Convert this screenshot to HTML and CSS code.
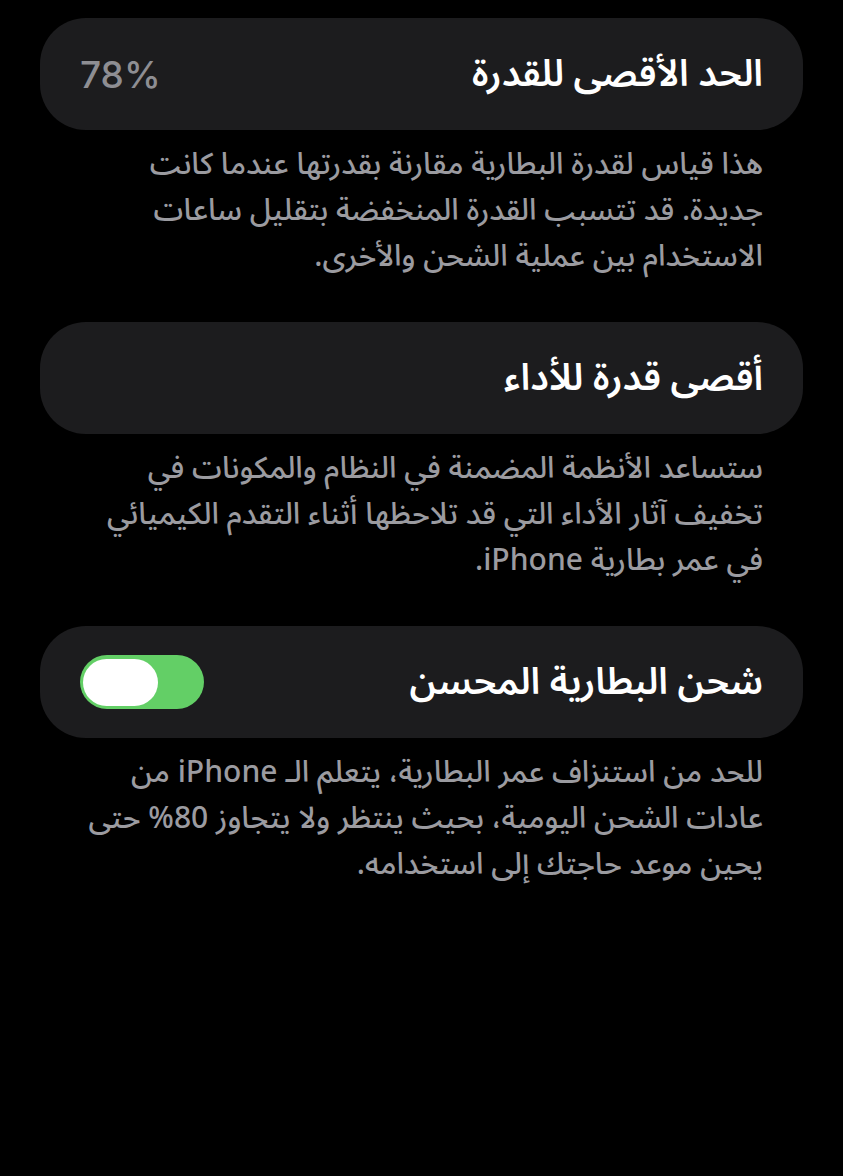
FILE: index.html
```html
<!DOCTYPE html>
<html lang="ar" dir="rtl">
<head>
<meta charset="utf-8">
<link rel="stylesheet" href="styles.css">
</head>
<body>
<main class="page">
  <section class="group">
    <div class="card">
      <span class="title">الحد الأقصى للقدرة</span>
      <span class="value">78%</span>
    </div>
    <p class="footer"><span class="line">هذا قياس لقدرة البطارية مقارنة بقدرتها عندما كانت</span><span class="line">جديدة. قد تتسبب القدرة المنخفضة بتقليل ساعات</span><span class="line">الاستخدام بين عملية الشحن والأخرى.</span></p>
  </section>
  <section class="group">
    <div class="card">
      <span class="title">أقصى قدرة للأداء</span>
    </div>
    <p class="footer"><span class="line">ستساعد الأنظمة المضمنة في النظام والمكونات في</span><span class="line">تخفيف آثار الأداء التي قد تلاحظها أثناء التقدم الكيميائي</span><span class="line">في عمر بطارية iPhone.</span></p>
  </section>
  <section class="group">
    <div class="card">
      <span class="title">شحن البطارية المحسن</span>
      <span class="toggle"><span class="knob"></span></span>
    </div>
    <p class="footer"><span class="line">للحد من استنزاف عمر البطارية، يتعلم الـ iPhone من</span><span class="line">عادات الشحن اليومية، بحيث ينتظر ولا يتجاوز 80% حتى</span><span class="line">يحين موعد حاجتك إلى استخدامه.</span></p>
  </section>
</main>
</body>
</html>
```
FILE: styles.css
```css
html, body {
  margin: 0;
  padding: 0;
  background: #000;
}
body {
  font-family: "Noto Sans Arabic", "DejaVu Sans", "Noto Sans", sans-serif;
  color: #fff;
}
.page {
  padding: 18px 40px 0 40px;
  display: flex;
  flex-direction: column;
  gap: 42px;
}
.group {
  display: flex;
  flex-direction: column;
}
.card {
  background: #1c1c1e;
  border-radius: 46px;
  height: 112px;
  padding: 0 40px;
  display: flex;
  align-items: center;
  justify-content: space-between;
  box-sizing: border-box;
}
.title {
  font-size: 37px;
  font-weight: 600;
  color: #fff;
}
.value {
  font-family: "Inter", "Liberation Sans", sans-serif;
  font-size: 37px;
  font-weight: 500;
  color: #8e8e93;
  direction: ltr;
}
.footer {
  margin: 12px 40px 0 10px;
  font-size: 30px;
  font-weight: 500;
  color: #9b9ba0;
  white-space: nowrap;
  display: flex;
  flex-direction: column;
}
.line {
  display: block;
  height: 46px;
  line-height: 46px;
}
.toggle {
  width: 124px;
  height: 54px;
  border-radius: 27px;
  background: #63cf66;
  display: flex;
  align-items: center;
  justify-content: flex-end;
  padding: 0 46px 0 3px;
  box-sizing: border-box;
}
.knob {
  width: 75px;
  height: 47px;
  border-radius: 24px;
  background: #fff;
}
```
